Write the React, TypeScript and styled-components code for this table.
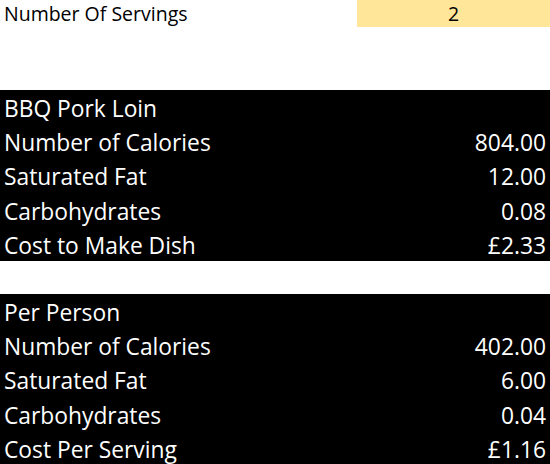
import React from "react";
import styled, { createGlobalStyle } from "styled-components";

const Global = createGlobalStyle`
  html, body { margin: 0; padding: 0; background: #ffffff; }
  body { font-family: "Open Sans", Lato, sans-serif; }
`;

const Sheet = styled.div`
  width: 550px;
  height: 464px;
  overflow: hidden;
  display: flex;
  flex-direction: column;
  background: #ffffff;
`;

const InputRow = styled.div`
  display: grid;
  grid-template-columns: 357px 1fr;
  height: 28px;
  margin-bottom: 63px;
`;

const Label = styled.div`
  display: flex;
  align-items: center;
  padding-left: 4px;
  font-size: 19.5px;
  color: #000000;
  white-space: nowrap;
`;

const InputCell = styled.div`
  background: #ffe699;
  display: flex;
  align-items: center;
  justify-content: center;
  font-size: 19.5px;
  color: #000000;
`;

const Block = styled.div<{ $gap?: number }>`
  background: #000000;
  display: flex;
  flex-direction: column;
  margin-bottom: ${(p) => p.$gap ?? 0}px;
  flex-shrink: 0;
`;

const Row = styled.div`
  display: flex;
  justify-content: space-between;
  align-items: center;
  height: 34.2px;
  padding: 3px 4px 0 4px;
  box-sizing: border-box;
  color: #ffffff;
  font-size: 22.8px;
  white-space: nowrap;
`;

type Item = [string, string];

const Table = ({ title, items, gap }: { title: string; items: Item[]; gap?: number }) => (
  <Block $gap={gap}>
    <Row>
      <span>{title}</span>
      <span />
    </Row>
    {items.map(([k, v]) => (
      <Row key={k}>
        <span>{k}</span>
        <span>{v}</span>
      </Row>
    ))}
  </Block>
);

export default function App() {
  return (
    <Sheet>
      <Global />
      <InputRow>
        <Label>Number Of Servings</Label>
        <InputCell>2</InputCell>
      </InputRow>
      <Table
        title="BBQ Pork Loin"
        gap={33}
        items={[
          ["Number of Calories", "804.00"],
          ["Saturated Fat", "12.00"],
          ["Carbohydrates", "0.08"],
          ["Cost to Make Dish", "£2.33"],
        ]}
      />
      <Table
        title="Per Person"
        items={[
          ["Number of Calories", "402.00"],
          ["Saturated Fat", "6.00"],
          ["Carbohydrates", "0.04"],
          ["Cost Per Serving", "£1.16"],
        ]}
      />
    </Sheet>
  );
}
